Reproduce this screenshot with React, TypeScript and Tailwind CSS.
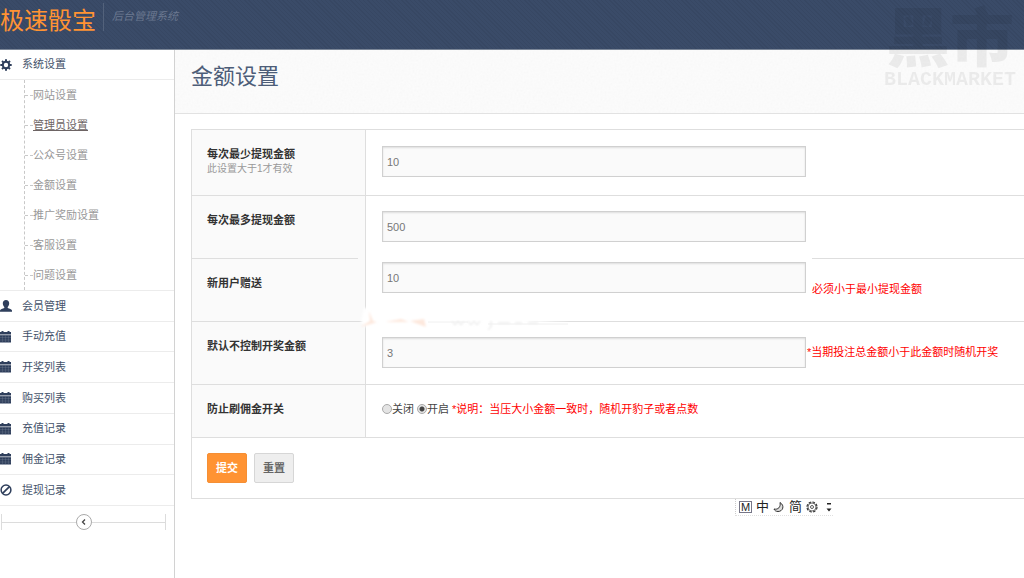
import React from "react";

const subMenu = [
  "网站设置",
  "管理员设置",
  "公众号设置",
  "金额设置",
  "推广奖励设置",
  "客服设置",
  "问题设置",
];

const mainMenu = [
  { label: "会员管理", icon: "user" },
  { label: "手动充值", icon: "calendar" },
  { label: "开奖列表", icon: "calendar" },
  { label: "购买列表", icon: "calendar" },
  { label: "充值记录", icon: "calendar" },
  { label: "佣金记录", icon: "calendar" },
  { label: "提现记录", icon: "ban" },
];

const MenuIcon = ({ name }: { name: string }) => (
  <svg viewBox="0 0 12 12" className="w-3 h-3 shrink-0 text-[#2f3f5c]" fill="currentColor" aria-hidden="true">
    {name === "cog" && (
      <>
        <circle cx="6" cy="6" r="3.2" fill="none" stroke="currentColor" strokeWidth="2" />
        <path
          d="M6 .3v2M6 9.7v2M.3 6h2M9.7 6h2M2 2l1.4 1.4M8.6 8.6 10 10M10 2 8.6 3.4M3.4 8.6 2 10"
          stroke="currentColor"
          strokeWidth="2"
        />
      </>
    )}
    {name === "user" && (
      <path d="M6 0c2 0 3.200 1.400 3.200 3.300 0 1.500-.6 2.900-1.500 3.700v1c1.500.6 4.300 1.200 4.300 2.500v1.200H0v-1.200C0 9.200 2.800 8.600 4.300 8V7C3.400 6.200 2.800 4.800 2.800 3.300 2.800 1.400 4 0 6 0z" />
    )}
    {name === "calendar" && (
      <>
        <path d="M0 1h1.500V0h2v1h4V0h2v1H11v2.600H0z" />
        <path d="M0 4.200h11V11.500H0z" />
        <path d="M0 6.500h11M0 9h11M2.500 4.500V12M5.500 4.500V12M8.500 4.500V12" stroke="#8b95a7" strokeWidth=".25" />
      </>
    )}
    {name === "ban" && (
      <>
        <circle cx="6" cy="6" r="4.900" fill="none" stroke="currentColor" strokeWidth="1.500" />
        <path d="M2.800 9.200 9.200 2.800" stroke="currentColor" strokeWidth="1.700" />
      </>
    )}
  </svg>
);

const Header = () => (
  <header className="flex h-[50px] border-b border-[#7c8798] bg-[#3a4b68] bg-[repeating-linear-gradient(45deg,rgba(0,0,0,0.05)_0px,rgba(0,0,0,0.05)_1px,transparent_1px,transparent_3px)]">
    <a href="#home" className="mt-[3px] text-2xl leading-9 text-[#ff9333]">
      极速骰宝
    </a>
    <p className="ml-[7px] mt-[3px] h-7 border-l border-[#53627b] pl-2 text-[11px] leading-[26px] italic text-[#6b7890]">
      后台管理系统
    </p>
  </header>
);

const Sidebar = () => (
  <nav className="w-[175px] shrink-0 border-r border-[#d2d2d2] bg-white">
    <a href="#system" className="flex h-[30px] items-center gap-[10px] border-b border-[#ececec] text-[#45536b]">
      <MenuIcon name="cog" />
      系统设置
    </a>
    <ul className="ml-6 border-l border-dashed border-[#c8c8c8]">
      {subMenu.map((item) => (
        <li key={item} className="flex h-[30px] items-center">
          <span className="w-2 border-t border-dashed border-[#c8c8c8]" />
          <a
            href="#sub"
            className={item === "管理员设置" ? "text-[#6d6464] underline" : "text-[#999]"}
          >
            {item}
          </a>
        </li>
      ))}
    </ul>
    <ul className="grid h-[216px] auto-rows-fr border-t border-[#ececec]">
      {mainMenu.map((item) => (
        <li key={item.label} className="flex border-b border-[#ececec]">
          <a href="#menu" className="flex grow items-center gap-[10px] text-[#45536b]">
            <MenuIcon name={item.icon} />
            {item.label}
          </a>
        </li>
      ))}
    </ul>
    <div className="ml-px mr-2 mt-2 flex h-4 items-center border-x border-[#dcdcdc]">
      <span className="h-px grow bg-[#dcdcdc]" />
      <button
        type="button"
        aria-label="收起菜单"
        className="flex h-4 w-4 items-center justify-center rounded-full border border-[#aaa] bg-white"
      >
        <svg viewBox="0 0 8 8" className="h-2 w-2" fill="none" stroke="#444" strokeWidth="1.3" aria-hidden="true">
          <path d="M5 1.500 2.500 4 5 6.500" />
        </svg>
      </button>
      <span className="h-px grow bg-[#dcdcdc]" />
    </div>
  </nav>
);

type FormRowProps = {
  id?: string;
  label: string;
  hint?: string;
  height: string;
  children: React.ReactNode;
};

const FormRow = ({ id, label, hint, height, children }: FormRowProps) => (
  <div className={`flex border-t border-[#dedede] ${height}`}>
    <div className="w-[174px] shrink-0 border-r border-[#dedede] bg-[#fafafa] pl-[15px] pt-4">
      <label htmlFor={id} className="block font-bold leading-4 text-[#333]">
        {label}
      </label>
      {hint && <p className="text-[10px] leading-[14px] text-[#999]">{hint}</p>}
    </div>
    <div className="relative grow pl-4">{children}</div>
  </div>
);

const TextInput = ({ id, value }: { id: string; value: string }) => (
  <input
    id={id}
    type="text"
    defaultValue={value}
    className="h-[31px] w-[424px] shrink-0 border border-[#d0d0d0] bg-[#fafafa] px-1 text-[11px] text-[#777] shadow-[inset_0_1px_2px_#ddd]"
  />
);

// faded stamp over the divider between two rows
const Smudge = () => (
  <svg viewBox="0 0 220 34" className="absolute -left-2 -top-5 h-[34px] w-[220px]" aria-hidden="true">
    <defs>
      <filter id="soft">
        <feGaussianBlur stdDeviation="0.8" />
      </filter>
    </defs>
    <path d="M6 6h190l14 12-40 3-20 5H9L3 20z" fill="#fff" filter="url(#soft)" />
    <g fill="#fde8dd" filter="url(#soft)">
      <path d="M2 25 12 19 11 9l4 10 4 1-6 2z" />
      <path d="M27 20l16-3 8 3z" />
      <path d="M52 19l14-2 2 8z" />
    </g>
    <path
      d="M94 19l3 4 3-4 3 4 3-4M110 19l3 4 3-4 3 4 3-4M133 19v6l-3 3M140 21h12M157 21h7M170 21h10"
      fill="none"
      stroke="#e2e2e2"
      filter="url(#soft)"
    />
    <path d="M70 20h40M130 22h80" stroke="#f0f0f0" />
  </svg>
);

const Radio = ({ label, checked = false }: { label: string; checked?: boolean }) => (
  <label className="flex items-center">
    <input
      type="radio"
      name="guard"
      defaultChecked={checked}
      className="h-[10px] w-[10px] appearance-none rounded-full border border-[#aaa] bg-[#e4e4e4] checked:bg-[radial-gradient(circle,#444_0px,#444_2px,#e4e4e4_3px)]"
    />
    {label}
  </label>
);

const SettingsForm = () => (
  <form className="ml-4 mt-[15px] border-b border-l border-[#dedede]">
    <FormRow id="min" label="每次最少提现金额" hint="此设置大于1才有效" height="min-h-[66px]">
      <div className="pt-4">
        <TextInput id="min" value="10" />
      </div>
    </FormRow>
    <FormRow id="max" label="每次最多提现金额" height="min-h-[63px]">
      <div className="pt-[15px]">
        <TextInput id="max" value="500" />
      </div>
    </FormRow>
    <FormRow id="gift" label="新用户赠送" height="min-h-[63px]">
      <span className="absolute -left-2 -top-px h-px w-[7px] bg-[#fafafa]" />
      <span className="absolute -top-px left-0 h-px w-[446px] bg-white" />
      <div className="flex items-start gap-[6px] pt-[3px]">
        <TextInput id="gift" value="10" />
        <span className="pt-[19px] leading-4 text-[#f00]">必须小于最小提现金额</span>
      </div>
    </FormRow>
    <FormRow id="random" label="默认不控制开奖金额" height="min-h-[63px]">
      <Smudge />
      <div className="flex items-start gap-px pt-[15px]">
        <TextInput id="random" value="3" />
        <span className="pt-[7px] leading-4 text-[#f00]">*当期投注总金额小于此金额时随机开奖</span>
      </div>
    </FormRow>
    <FormRow label="防止刷佣金开关" height="min-h-[53px]">
      <div className="flex items-center gap-[3px] pt-4 leading-4 text-[#444]">
        <Radio label="关闭" />
        <Radio label="开启" checked />
        <span className="text-[#f00]">*说明：当压大小金额一致时，随机开豹子或者点数</span>
      </div>
    </FormRow>
    <div className="flex gap-[7px] border-t border-[#dedede] px-[15px] py-[15px] font-bold">
      <button type="submit" className="h-[30px] w-10 rounded-xs border border-[#f58f35] bg-[#ff9333] text-white">
        提交
      </button>
      <button type="reset" className="h-[30px] w-10 rounded-xs border border-[#d6d6d6] bg-[#eee] text-[#666]">
        重置
      </button>
    </div>
  </form>
);

const Watermark = () => (
  <div
    aria-hidden="true"
    className="pointer-events-none absolute right-2 top-2 flex flex-col items-center text-black opacity-[0.06]"
  >
    <span className="text-[64px] font-black leading-[62px]">黑市</span>
    <span className="font-['Liberation_Mono',monospace] text-xl font-bold leading-5">BLACKMARKET</span>
  </div>
);

const ImeBar = () => (
  <div className="absolute left-[735px] top-[499px] flex h-[17px] w-[98px] items-center gap-1 border-b border-l border-b-[#e0e0e0] border-l-[#ccc] border-dotted bg-white pl-[3px] text-[13px] leading-4 text-[#222]">
    <span className="flex h-3 w-[13px] items-center justify-center border border-[#778] text-[11px]">M</span>
    <span>中</span>
    <svg viewBox="0 0 12 12" className="h-3 w-3" fill="#ddd" stroke="#333" aria-hidden="true">
      <path d="M7 1.500c5 3 3 9-2 9-2 0-3.500-1-4-2.500C5 9 8 6 7 1.500z" />
    </svg>
    <span>简</span>
    <svg viewBox="0 0 12 12" className="h-3 w-3" fill="none" stroke="#333" aria-hidden="true">
      <circle cx="6" cy="6" r="5" strokeWidth="1.200" strokeDasharray="2.600 1.300" />
      <circle cx="6" cy="6" r="4" strokeWidth=".7" />
      <circle cx="6" cy="6" r="1.500" strokeWidth=".8" />
    </svg>
    <svg viewBox="0 0 6 12" className="ml-1 h-3 w-[6px]" fill="#222" aria-hidden="true">
      <path d="M1 2h4v1.500H1zM.500 7.500h5L3 10.500z" />
    </svg>
  </div>
);

export default function App() {
  return (
    <div className="relative flex min-h-screen flex-col overflow-hidden bg-white font-['Liberation_Sans','Noto_Sans_CJK_SC',sans-serif] text-[11px]">
      <Header />
      <div className="flex grow">
        <Sidebar />
        <main className="min-w-0 grow">
          <div className="relative h-16 border-b border-[#e2e2e2] bg-[#fcfcfc]">
            <svg className="absolute inset-0 h-full w-full opacity-[0.05]" aria-hidden="true">
              <filter id="grain">
                <feTurbulence type="fractalNoise" baseFrequency="0.5" numOctaves="2" />
                <feColorMatrix type="saturate" values="0" />
              </filter>
              <rect width="100%" height="100%" filter="url(#grain)" />
            </svg>
            <h1 className="relative pl-4 pt-[11px] text-[22px] leading-8 text-[#4d5d78]">金额设置</h1>
          </div>
          <SettingsForm />
        </main>
      </div>
      <Watermark />
      <ImeBar />
    </div>
  );
}
